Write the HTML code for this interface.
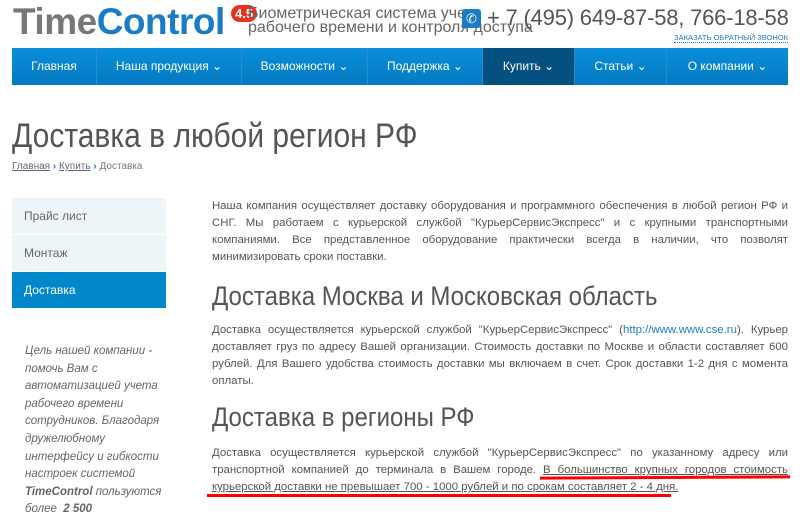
<!DOCTYPE html>
<html><head><meta charset="utf-8"><style>
*{margin:0;padding:0;box-sizing:border-box}
body{width:800px;height:505px;overflow:hidden;background:#fff;font-family:"Liberation Sans",sans-serif;color:#555;position:relative}
.abs{position:absolute}
.logo{left:13px;top:2px;font-size:37px;font-weight:bold;letter-spacing:-0.5px;line-height:40px}
.badge{left:231px;top:5px;background:#e8321f;color:#fff;font-weight:bold;font-size:13px;border-radius:9px;padding:0 4px;line-height:17px}
.tag{left:248px;top:7px;font-size:16px;line-height:14px;color:#666;white-space:nowrap}
.phoneic{left:462px;top:9px;width:19px;height:19px;background:#1a7cc4;border-radius:3px;color:#fff;font-size:13px;text-align:center;line-height:19px}
.phone{left:487px;top:5px;font-size:22px;color:#555;white-space:nowrap;letter-spacing:-0.2px}
.call{right:12px;top:33px;font-size:7.5px;color:#1a7cc4;border-bottom:1px dotted #1a7cc4;line-height:9px;white-space:nowrap}
.nav{left:12px;top:48px;width:776px;height:37px;background:linear-gradient(#0a8fd8,#0379c2);display:flex}
.nav div{color:#fff;font-size:12px;line-height:37px;text-align:center;border-right:1px solid #2a8ccc}
.nav .act{background:#04507e}
h1{position:absolute;left:12px;top:117px;font-size:30px;font-weight:normal;color:#555;transform:scaleY(1.15);transform-origin:left top}
.bc{left:12px;top:161px;font-size:10px;color:#777}
.bc u{color:#667}
.bc b{color:#1a7cc4}
.side{left:12px;width:154px;height:36px;background:#eef5f8;font-size:12px;color:#666;padding-left:12px;line-height:36px}
.it{left:25px;top:343px;width:140px;font-style:italic;font-size:11.5px;line-height:17.6px;color:#666}
.p{left:212px;width:576px;font-size:11.4px;line-height:17px;text-align:justify;color:#555}
h2{position:absolute;left:212px;font-size:24px;font-weight:normal;color:#555;transform:scaleY(1.1);transform-origin:left top}
a{color:#1a7cc4}
.red{background:#f00;height:3px;position:absolute}
</style></head><body>
<div class="abs logo"><span style="color:#777">Time</span><span style="color:#1a7cc4">Control</span></div>
<div class="abs badge">4.5</div>
<div class="abs tag">Биометрическая система учета<br>рабочего времени и контроля доступа</div>
<div class="abs phoneic">✆</div>
<div class="abs phone">+ 7 (495) 649-87-58, 766-18-58</div>
<div class="abs call">ЗАКАЗАТЬ ОБРАТНЫЙ ЗВОНОК</div>
<div class="abs nav">
<div style="width:85px">Главная</div>
<div style="width:145px">Наша продукция ⌄</div>
<div style="width:126px">Возможности ⌄</div>
<div style="width:115px">Поддержка ⌄</div>
<div class="act" style="width:92px">Купить ⌄</div>
<div style="width:92px">Статьи ⌄</div>
<div style="width:121px;border:0">О компании ⌄</div>
</div>
<h1>Доставка в любой регион РФ</h1>
<div class="abs bc"><u>Главная</u> <b>›</b> <u>Купить</u> <b>›</b> Доставка</div>
<div class="abs side" style="top:198px">Прайс лист</div>
<div class="abs side" style="top:235px">Монтаж</div>
<div class="abs side" style="top:272px;background:#0287cb;color:#fff">Доставка</div>
<div class="abs it">Цель нашей компании - помочь Вам с автоматизацией учета рабочего времени сотрудников. Благодаря дружелюбному интерфейсу и гибкости настроек системой <b>TimeControl</b> пользуются более &nbsp;<b>2 500</b></div>
<div class="abs p" style="top:198px">Наша компания осуществляет доставку оборудования и программного обеспечения в любой регион РФ и СНГ. Мы работаем с курьерской службой "КурьерСервисЭкспресс" и с крупными транспортными компаниями. Все представленное оборудование практически всегда в наличии, что позволят минимизировать сроки поставки.</div>
<h2 style="top:282px">Доставка Москва и Московская область</h2>
<div class="abs p" style="top:322px">Доставка осуществляется курьерской службой "КурьерСервисЭкспресс" (<a>http://www.www.cse.ru</a>). Курьер доставляет груз по адресу Вашей организации. Стоимость доставки по Москве и области составляет 600 рублей. Для Вашего удобства стоимость доставки мы включаем в счет. Срок доставки 1-2 дня с момента оплаты.</div>
<h2 style="top:403px">Доставка в регионы РФ</h2>
<div class="abs p" style="top:445px">Доставка осуществляется курьерской службой "КурьерСервисЭкспресс" по указанному адресу или транспортной компанией до терминала в Вашем городе. <u>В большинство крупных городов стоимость курьерской доставки не превышает 700 - 1000 рублей и по срокам составляет 2 - 4 дня.</u></div>
<div class="red" style="left:540px;top:476px;width:250px;transform:rotate(-0.3deg)"></div>
<div class="red" style="left:207px;top:494px;width:464px"></div>
</body></html>
